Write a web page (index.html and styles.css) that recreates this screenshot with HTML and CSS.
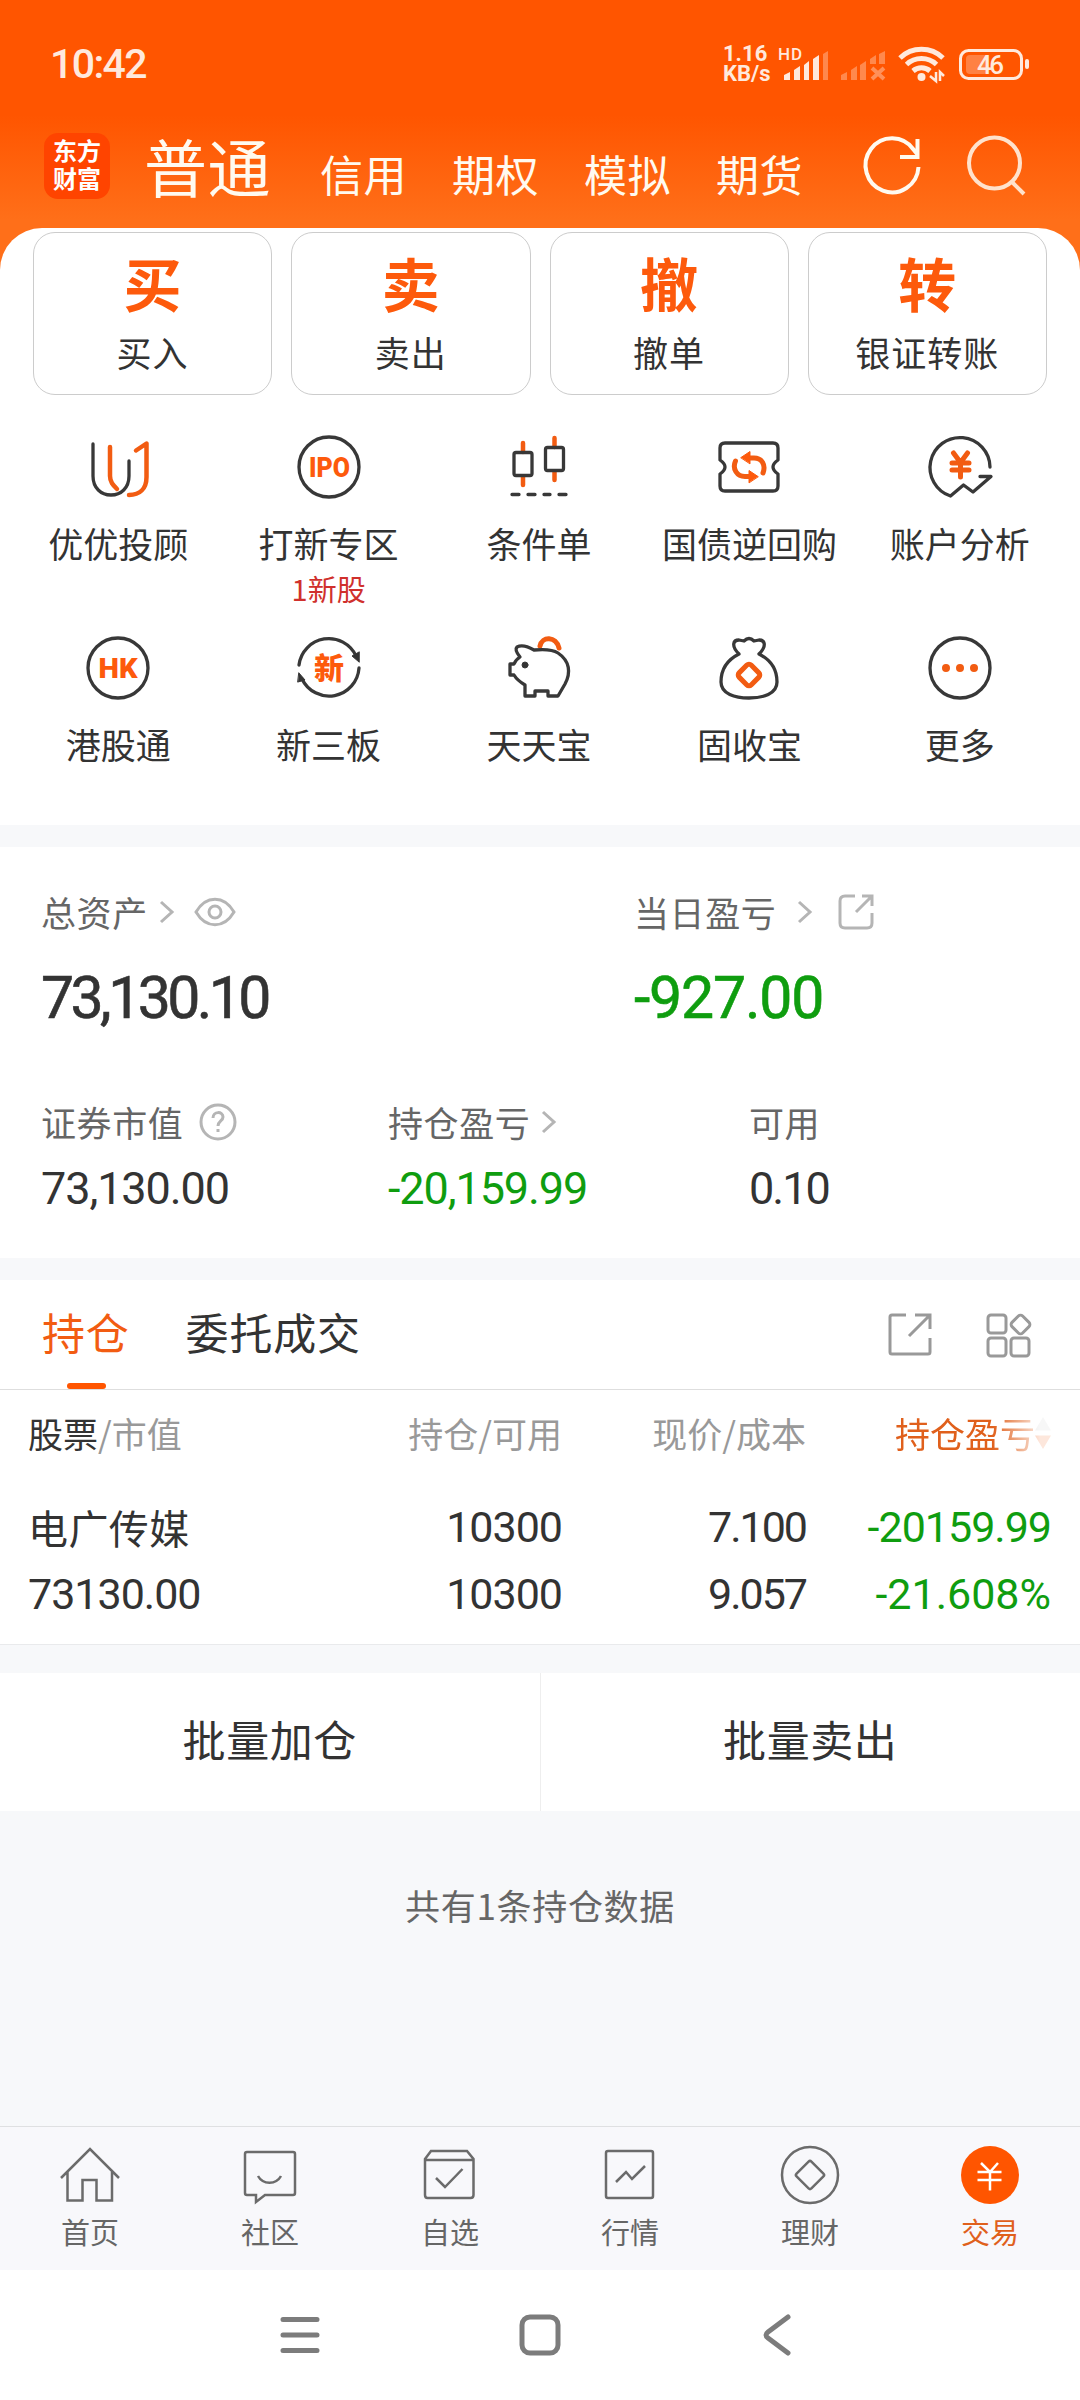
FILE: index.html
```
<!DOCTYPE html>
<html lang="zh-CN">

<head>
    <meta charset="UTF-8" />
    <title>交易</title>
    <meta name="viewport" content="width=device-width, initial-scale=1.0" />
    <link rel="stylesheet" href="styles.css">
</head>

<body>
    <header class="top">
        <div class="status-bar">
            <span class="clock">10:42</span>
            <div class="status-icons">
                <div class="net-speed"><span>1.16</span><span>KB/s</span></div>
                <svg class="signal" width="52" height="36" viewBox="0 0 52 36">
                    <text x="0" y="14" font-size="17" textLength="24">HD</text>
                    <path d="M6 34v-5l6-3v8zM16 34V24l6-4v14zM26 34V19l5-4v19zM35 34V13l6-4v25z" />
                    <path opacity=".35" d="M45 34V8l5-3v29z" />
                </svg>
                <svg class="signal-off" width="46" height="36" viewBox="0 0 46 36" opacity=".35">
                    <path d="M1 34v-5l6-3v8zM11 34V24l6-4v14zM20 34V19l6-4v19zM30 18v-5l6-4v9zM39 18V8l6-3v13z" />
                    <path d="M32 22l12 11M44 22L32 33" stroke="#fff" stroke-width="4" />
                </svg>
                <svg class="wifi" width="48" height="40" viewBox="0 0 48 40" fill="none" stroke="#ffe9dd" stroke-width="5">
                    <path d="M2 14a31 31 0 0 1 43 0M8.500 20.500a22 22 0 0 1 30 0M15 27a13 13 0 0 1 17 0" />
                    <circle cx="23.500" cy="33" r="4" fill="#ffe9dd" stroke="none" />
                    <path d="M32 32l6 5V28M42 37v-9l4 4" stroke-width="2.500" />
                </svg>
                <svg class="battery" width="72" height="36" viewBox="0 0 72 36">
                    <rect x="1.500" y="4.500" width="61" height="28" rx="8" fill="none" stroke="#ffe9dd" stroke-width="3" />
                    <rect x="7" y="9" width="22" height="19" rx="4" opacity=".3" />
                    <rect x="66" y="13" width="4" height="10" rx="2" />
                    <text x="18" y="28" font-size="26" textLength="27">46</text>
                </svg>
            </div>
        </div>
        <div class="title-bar">
            <div class="logo">东方<br>财富</div>
            <nav class="account-tabs">
                <b>普通</b>
                <span>信用</span>
                <span>期权</span>
                <span>模拟</span>
                <span>期货</span>
            </nav>
            <svg class="refresh" width="64" height="64" viewBox="0 0 64 64">
                <path d="M58.500 33a26.500 27 0 1 1-5-17.500l4 5M57.500 5v18H40" />
            </svg>
            <svg class="search" width="64" height="64" viewBox="0 0 64 64">
                <circle cx="30.500" cy="29" r="25.500" />
                <path d="M47 47l13 13" />
            </svg>
        </div>
    </header>

    <main>
        <section class="sheet">
            <div class="actions">
                <div class="action"><b>买</b><span>买入</span></div>
                <div class="action"><b>卖</b><span>卖出</span></div>
                <div class="action"><b>撤</b><span>撤单</span></div>
                <div class="action"><b>转</b><span>银证转账</span></div>
            </div>

            <div class="tools">
                <div class="tool">
                    <svg viewBox="0 0 64 64">
                        <path d="M7 9v32c0 12 8 19 18 19s18-7 18-19V26" />
                        <path class="hot" d="M24 12v29c0 6 3 9 7 13M50 15.500l10.500-7V42c0 12-7 18-17.500 18" />
                    </svg>
                    <span>优优投顾</span>
                </div>
                <div class="tool">
                    <svg viewBox="0 0 64 64">
                        <circle cx="32" cy="32" r="30" />
                        <text x="12" y="41.500" font-size="27" textLength="41" lengthAdjust="spacingAndGlyphs">IPO</text>
                    </svg>
                    <span>打新专区</span>
                    <em>1新股</em>
                </div>
                <div class="tool">
                    <svg viewBox="0 0 64 64">
                        <path class="hot" d="M16 8v9M16 42v8M47.500 3v9M47.500 37v8" />
                        <rect x="7" y="17.500" width="18" height="23" rx="2" />
                        <rect x="38.500" y="12.500" width="18" height="23" rx="2" />
                        <path d="M5 59.500h7M21 59.500h7M37 59.500h6M52 59.500h7" />
                    </svg>
                    <span>条件单</span>
                </div>
                <div class="tool">
                    <svg viewBox="0 0 64 64">
                        <path d="M8 8h48q5 0 5 5v12q-10 7 0 14v12q0 5-5 5H8q-5 0-5-5V39q10-7 0-14V13q0-5 5-5z" />
                        <path class="hot bold" d="M33 23h4c8 0 12 7 9 15M18.500 26C15 34 20 41.500 28 41.500h4" />
                        <path class="hot-fill" d="M24 22.500l9-6v12zM41 41.500l-9-6v12z" />
                    </svg>
                    <span>国债逆回购</span>
                </div>
                <div class="tool">
                    <svg viewBox="0 0 64 64">
                        <path d="M62 32A30 30 0 1 0 22.500 61L35.500 50l9.500 7 18-15.500H52" />
                        <path class="hot bold" d="M25.500 18l7 9.500 7-9.500M32.500 27v15M24 28h17M24 35h17" />
                    </svg>
                    <span>账户分析</span>
                </div>
                <div class="tool">
                    <svg viewBox="0 0 64 64">
                        <circle cx="32" cy="32" r="30" />
                        <text x="12.500" y="42" font-size="28" textLength="39" lengthAdjust="spacingAndGlyphs">HK</text>
                    </svg>
                    <span>港股通</span>
                </div>
                <div class="tool">
                    <svg viewBox="0 0 64 64">
                        <path d="M2 29a30 30 0 0 1 57-9M62 32A30 30 0 0 1 5 43" />
                        <path class="dark-fill" d="M62 26l-7-6 7-4zM2 37l6 7-7 2z" />
                        <text class="cjk" x="17" y="43" font-size="30">新</text>
                    </svg>
                    <span>新三板</span>
                </div>
                <div class="tool">
                    <svg viewBox="0 0 64 64">
                        <path class="hot bold" d="M33 10c2-10 16-10 19 2" />
                        <path d="M27 14c10-1 18-1 24 3 12 8 13 20 7 31l-7 12H41v-5H28v5H18V49C13 46 10 44 7 39H3V28h4c1-3 3-5 6-7-4-5-5-8-3-10 4-2 10-1 17 3z" />
                        <circle class="dark-fill" cx="18" cy="29" r="3" />
                    </svg>
                    <span>天天宝</span>
                </div>
                <div class="tool">
                    <svg viewBox="0 0 64 64">
                        <path d="M22 18C14 10 16 4 22 4l5 1q5-5 10 0l5-1c6 0 8 6 0 14 12 6 18 16 18 28s-14 16-28 16S4 58 4 46s6-22 18-28z" />
                        <rect class="hot bold" x="23.500" y="30.500" width="17" height="17" rx="3" transform="rotate(45 32 39)" />
                    </svg>
                    <span>固收宝</span>
                </div>
                <div class="tool">
                    <svg viewBox="0 0 64 64">
                        <circle cx="32" cy="32" r="30" />
                        <path class="hot dots" d="M18 32h0M32 32h0M46 32h0" />
                    </svg>
                    <span>更多</span>
                </div>
            </div>
        </section>

        <section class="assets">
            <div class="assets-main">
                <div>
                    <div class="label">总资产
                        <svg class="chevron near" viewBox="0 0 16 24"><path d="M3 2l11 10L3 22" /></svg>
                        <svg class="eye" viewBox="0 0 42 30">
                            <path d="M2 15C12-2 30-2 40 15 30 32 12 32 2 15z" />
                            <circle cx="21" cy="15" r="6" />
                        </svg>
                    </div>
                    <div class="num big">73,130.10</div>
                </div>
                <div>
                    <div class="label">当日盈亏
                        <svg class="chevron far" viewBox="0 0 16 24"><path d="M3 2l11 10L3 22" /></svg>
                        <svg class="export" viewBox="0 0 36 36">
                            <path d="M17 2H7Q2 2 2 7v22q0 5 5 5h22q5 0 5-5V19M24 2h10v10M34 2L18 18" />
                        </svg>
                    </div>
                    <div class="num big today down">-927.00</div>
                </div>
            </div>
            <div class="assets-sub">
                <div>
                    <div class="label">证券市值
                        <svg class="help" viewBox="0 0 38 38">
                            <circle cx="19" cy="19" r="17" />
                            <path d="M14 15c0-7 10-7 10-1 0 4-5 4-5 9M19 26v3" />
                        </svg>
                    </div>
                    <div class="num mid">73,130.00</div>
                </div>
                <div>
                    <div class="label">持仓盈亏
                        <svg class="chevron near" viewBox="0 0 16 24"><path d="M3 2l11 10L3 22" /></svg>
                    </div>
                    <div class="num mid down">-20,159.99</div>
                </div>
                <div>
                    <div class="label">可用</div>
                    <div class="num mid free">0.10</div>
                </div>
            </div>
        </section>

        <section class="holdings">
            <div class="tabs">
                <span class="tab active">持仓</span>
                <span class="tab">委托成交</span>
                <div class="tab-icons">
                    <svg width="46" height="46" viewBox="0 0 46 46">
                        <path d="M19 3H5Q3 3 3 5v35q0 2 2 2h36q2 0 2-2V26M28 3h15v14M43 3L22 24" />
                    </svg>
                    <svg width="46" height="46" viewBox="0 0 46 46">
                        <rect x="2" y="3" width="18" height="18" rx="3" />
                        <rect x="2" y="26" width="18" height="18" rx="3" />
                        <rect x="25" y="26" width="18" height="18" rx="3" />
                        <rect x="27" y="5" width="15" height="15" rx="3" transform="rotate(45 34.500 12.500)" />
                    </svg>
                </div>
            </div>
            <table>
                <thead>
                    <tr>
                        <th><strong>股票</strong>/市值</th>
                        <th>持仓/可用</th>
                        <th>现价/成本</th>
                        <th class="sorted"><span>持仓盈亏<i></i></span></th>
                    </tr>
                </thead>
                <tbody>
                    <tr>
                        <td class="stock">电广传媒</td>
                        <td>10300</td>
                        <td class="price">7.100</td>
                        <td class="down">-20159.99</td>
                    </tr>
                    <tr>
                        <td>73130.00</td>
                        <td>10300</td>
                        <td class="price">9.057</td>
                        <td class="down rate">-21.608%</td>
                    </tr>
                </tbody>
            </table>
        </section>

        <div class="batch">
            <span>批量加仓</span>
            <span>批量卖出</span>
        </div>
        <p class="summary">共有1条持仓数据</p>
    </main>

    <nav class="bottom-nav">
        <div class="nav-item">
            <svg viewBox="0 0 60 60"><path d="M1 33L30 4l29 29M7.500 27v28.500h15V35h14v20.500H52V27" /></svg>
            <span>首页</span>
        </div>
        <div class="nav-item">
            <svg viewBox="0 0 60 60"><path d="M7 7h46q2 0 2 2v39q0 2-2 2H25l-9 7v-7H7q-2 0-2-2V9q0-2 2-2zM18 31c5 9 18 9 23 0" /></svg>
            <span>社区</span>
        </div>
        <div class="nav-item">
            <svg viewBox="0 0 60 60"><path d="M5 14l6-8h36l6.500 8V50q0 3-3 3h-43Q5 53 5 50zM5 15h48M16 33l9 9 17.500-18" /></svg>
            <span>自选</span>
        </div>
        <div class="nav-item">
            <svg viewBox="0 0 60 60"><rect x="6" y="6" width="47" height="47" rx="2" /><path d="M16 37l10-10 6 7 13-13" /></svg>
            <span>行情</span>
        </div>
        <div class="nav-item">
            <svg viewBox="0 0 60 60"><circle cx="30" cy="30" r="28" /><rect x="19.500" y="19.500" width="21" height="21" rx="2" transform="rotate(45 30 30)" /></svg>
            <span>理财</span>
        </div>
        <div class="nav-item current">
            <svg viewBox="0 0 60 60"><circle cx="30" cy="30" r="29" /><path d="M21 18l9 9 8-9M30 27v18.500M17.500 27h24M17.500 35h24" /></svg>
            <span>交易</span>
        </div>
    </nav>

    <footer class="system-nav">
        <svg width="40" height="44" viewBox="0 0 40 44"><path d="M3 6.500h34M3 22h34M3 37.500h34" /></svg>
        <svg width="44" height="44" viewBox="0 0 44 44"><rect x="4" y="4" width="36" height="36" rx="8" /></svg>
        <svg width="40" height="44" viewBox="0 0 40 44"><path d="M29 4L9 19q-4 3 0 6l20 15" /></svg>
    </footer>
</body>

</html>
```
FILE: styles.css
```
* {
    box-sizing: border-box;
}

body {
    margin: 0;
    width: 1080px;
    height: 2400px;
    display: flex;
    flex-direction: column;
    font-family: "Noto Sans CJK SC", sans-serif;
    font-size: 35px;
    line-height: 50px;
    color: #333;
    background: #f7f8fa;
}

svg {
    display: block;
    flex-shrink: 0;
    overflow: visible;
}

b {
    font-weight: 700;
}

/* header */
.top {
    height: 228px;
    background: linear-gradient(#ff5500 115px, #ff6f19 220px);
    color: #fffaf0;
}

.status-bar {
    height: 128px;
    padding: 0 49px 0 50px;
    display: flex;
    align-items: center;
    justify-content: space-between;
    color: #ffe9dd;
    font-family: Roboto, sans-serif;
}

.clock {
    font-size: 41px;
    font-weight: 500;
    letter-spacing: -1.6px;
}

.status-icons {
    display: flex;
    align-items: center;
    fill: #ffe9dd;
    font-weight: 500;
}

.net-speed {
    display: flex;
    flex-direction: column;
    width: 55px;
    font-size: 22px;
    font-weight: 700;
    line-height: 20px;
}

.signal-off {
    margin-left: 10px;
}

.wifi {
    margin-left: 12px;
}

.battery {
    margin-left: 13px;
}

.title-bar {
    display: flex;
    height: 100px;
    padding-left: 44px;
}

.logo {
    width: 66px;
    height: 66px;
    margin-top: 5px;
    padding-top: 3px;
    border-radius: 14px;
    background: #ff4400;
    color: #fff;
    text-align: center;
    font-size: 24px;
    font-weight: 700;
    line-height: 28px;
}

.account-tabs {
    display: flex;
    align-items: baseline;
    width: 751px;
    margin-top: -3px;
    margin-left: 34px;
    font-size: 43px;
    line-height: 80px;
    letter-spacing: .5px;
}

.account-tabs b {
    width: 176px;
    font-size: 63px;
    font-weight: 400;
}

.account-tabs span {
    width: 132px;
}

.refresh,
.search {
    margin-top: 6px;
    fill: none;
    stroke: #fffaf0;
    stroke-width: 4;
}

.refresh {
    margin-left: -35px;
}

.search {
    margin-left: 40px;
    stroke: #ffe2cc;
}

main {
    flex: 1;
    background: linear-gradient(#ff6f19 60px, #f7f8fa 60px);
}

/* entry sheet */
.sheet {
    height: 597px;
    padding-top: 4px;
    border-radius: 42px 42px 0 0;
    background: #fff;
}

.actions {
    display: grid;
    grid-template-columns: repeat(4, 1fr);
    gap: 19px;
    padding: 0 33px;
}

.action {
    height: 163px;
    border: 1px solid #ccc;
    border-radius: 22px;
    text-align: center;
}

.action b {
    display: block;
    margin-top: 9px;
    font-size: 58px;
    line-height: 80px;
    color: #fd5a0c;
}

.action span {
    display: block;
    margin-top: 5px;
    line-height: 50px;
    letter-spacing: 1px;
}

.tools {
    display: grid;
    grid-template-columns: repeat(5, 1fr);
    grid-auto-rows: 201px;
    padding: 40px 15px 0 13px;
}

.tool {
    display: flex;
    flex-direction: column;
    align-items: center;
    white-space: nowrap;
}

.tool svg {
    width: 64px;
    height: 64px;
    margin-bottom: 19px;
    fill: none;
    stroke: #383838;
    stroke-width: 3.3;
    stroke-linecap: round;
    stroke-linejoin: round;
}

.tool span {
    line-height: 50px;
}

.tool em {
    font-style: normal;
    font-size: 29px;
    line-height: 40px;
    color: #d0302c;
}

.tool text {
    fill: #fd5a0c;
    stroke: none;
    font-family: Roboto, sans-serif;
    font-weight: 900;
}

.tool text.cjk {
    font-family: "Noto Sans CJK SC", sans-serif;
}

.tool .hot {
    stroke: #f25c12;
    stroke-width: 4.5;
}

.tool .bold {
    stroke-width: 5;
}

.tool .dots {
    stroke-width: 8;
}

.tool .hot-fill {
    fill: #fd5a0c;
    stroke: #fd5a0c;
    stroke-width: 1;
}

.tool .dark-fill {
    fill: #333;
    stroke-width: 1;
}

/* assets */
.assets {
    height: 411px;
    margin-top: 22px;
    padding: 40px 41px 0;
    background: #fff;
}

.assets-main {
    display: grid;
    grid-template-columns: 593px 1fr;
    height: 210px;
}

.assets-sub {
    display: grid;
    grid-template-columns: 347px 361px 1fr;
}

.label {
    display: flex;
    align-items: center;
    height: 50px;
    letter-spacing: .6px;
    color: #666;
}

.label svg {
    fill: none;
    stroke: #b5b5b5;
    stroke-width: 3;
}

.chevron {
    width: 16px;
    height: 24px;
}

.near {
    margin-left: 10px;
}

.far {
    margin-left: 20px;
}

.eye {
    width: 42px;
    height: 30px;
    margin-left: 20px;
}

.export {
    width: 36px;
    height: 36px;
    margin-left: 26px;
}

.help {
    width: 38px;
    height: 38px;
    margin-left: 16px;
}

.num,
td {
    font-family: Roboto, "Noto Sans CJK SC", sans-serif;
}

.big {
    margin-top: 26px;
    font-size: 59px;
    line-height: 70px;
    letter-spacing: -3.6px;
    -webkit-text-stroke: .6px;
}

.today {
    letter-spacing: -1.2px;
}

.mid {
    margin-top: 14px;
    font-size: 45px;
    line-height: 56px;
    letter-spacing: -1.1px;
}

.free {
    letter-spacing: -2px;
}

.down {
    color: #0f9d0f;
}

/* holdings */
.holdings {
    height: 365px;
    margin-top: 22px;
    border-bottom: 1px solid #e9eaec;
    background: #fff;
}

.tabs {
    display: flex;
    height: 110px;
    padding: 0 48px 0 42px;
    border-bottom: 1px solid #dedede;
    font-size: 43px;
    line-height: 103px;
    letter-spacing: .8px;
}

.tab {
    position: relative;
    margin-right: 56px;
}

.active {
    color: #f25c12;
}

.active::after {
    content: "";
    position: absolute;
    left: 25px;
    bottom: 0;
    width: 39px;
    height: 6px;
    border-radius: 3px;
    background: #ff5500;
}

.tab-icons {
    display: flex;
    gap: 53px;
    margin: 32px 0 0 auto;
    fill: none;
    stroke: #999;
    stroke-width: 3;
}

table {
    width: 1080px;
    table-layout: fixed;
    border-collapse: collapse;
}

th,
td {
    padding: 0;
    text-align: right;
    font-weight: 400;
    white-space: nowrap;
}

th {
    height: 104px;
    padding-bottom: 18px;
    color: #999;
}

th:nth-child(1) {
    width: 318px;
}

th:nth-child(2),
th:nth-child(3) {
    width: 244px;
}

th:first-child,
td:first-child {
    padding-left: 28px;
    text-align: left;
}

th:last-child,
td:last-child {
    padding-right: 29px;
}

th strong {
    font-weight: 400;
    color: #333;
}

.sorted {
    color: #e0601c;
}

.sorted span {
    display: inline-flex;
    align-items: center;
    -webkit-mask-image: linear-gradient(90deg, #000 97px, rgba(0, 0, 0, .15) 145px);
    mask-image: linear-gradient(90deg, #000 97px, rgba(0, 0, 0, .15) 145px);
}

/* two small arrows, the lower one lit */
.sorted i {
    width: 16px;
    height: 32px;
    background: linear-gradient(#ccc 50%, #f25c12 50%);
    clip-path: polygon(50% 0, 100% 42%, 0 42%, 0 58%, 100% 58%, 50% 100%, 0 58%, 0 42%);
}

td {
    height: 67px;
    font-size: 43px;
    line-height: 67px;
    letter-spacing: -1px;
}

td.stock {
    font-family: "Noto Sans CJK SC", sans-serif;
    font-size: 40px;
    letter-spacing: .4px;
}

td.price {
    letter-spacing: -2px;
}

td.rate {
    letter-spacing: 0;
}

/* batch buttons */
.batch {
    display: flex;
    height: 138px;
    margin-top: 28px;
    background: #fff;
}

.batch span {
    flex: 1;
    font-size: 43px;
    line-height: 131px;
    letter-spacing: .6px;
    text-align: center;
}

.batch span + span {
    border-left: 1px solid #eee;
}

.summary {
    margin: 69px 0 0;
    text-align: center;
    letter-spacing: .7px;
    color: #666;
}

/* bottom navigation */
.bottom-nav {
    display: flex;
    height: 144px;
    border-top: 1px solid #dfe0e2;
    background: #f8f8fb;
}

.nav-item {
    flex: 1;
    display: flex;
    flex-direction: column;
    align-items: center;
    padding-top: 18px;
    font-size: 29px;
    line-height: 40px;
    color: #666;
}

.nav-item svg {
    width: 60px;
    height: 60px;
    margin-bottom: 6px;
    fill: none;
    stroke: #6b6b6b;
    stroke-width: 2.5;
}

.current {
    color: #e0601c;
}

.current svg {
    stroke: #fff;
}

.current circle {
    fill: #ff5500;
    stroke: none;
}

.system-nav {
    display: flex;
    height: 130px;
    padding: 43px 281px 0 280px;
    justify-content: space-between;
    background: #fff;
}

.system-nav svg {
    fill: none;
    stroke: #7c7c7c;
    stroke-width: 5;
    stroke-linecap: round;
}
```
